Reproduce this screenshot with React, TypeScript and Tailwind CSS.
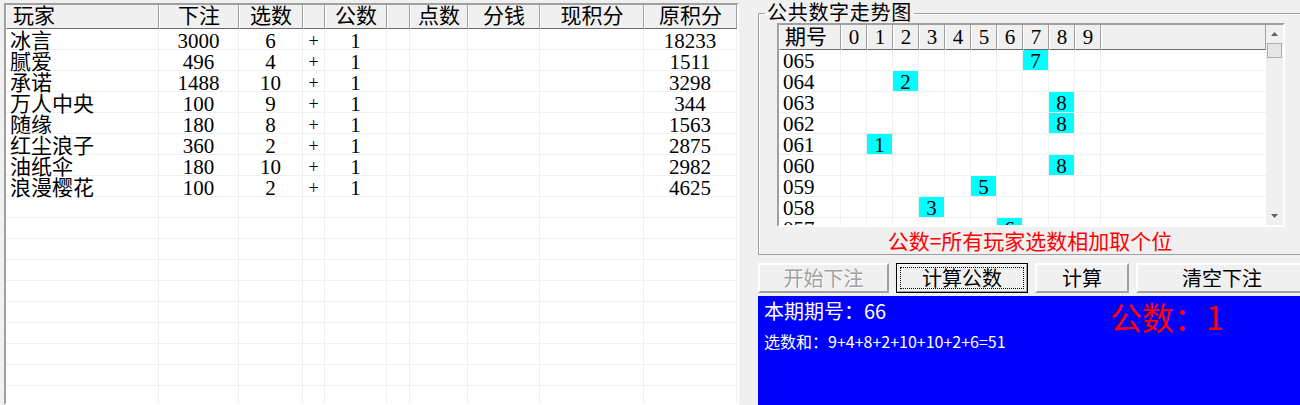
const players = [
  { name: "冰言", bet: "3000", pick: "6", pub: "1", orig: "18233" },
  { name: "腻爱", bet: "496", pick: "4", pub: "1", orig: "1511" },
  { name: "承诺", bet: "1488", pick: "10", pub: "1", orig: "3298" },
  { name: "万人中央", bet: "100", pick: "9", pub: "1", orig: "344" },
  { name: "随缘", bet: "180", pick: "8", pub: "1", orig: "1563" },
  { name: "红尘浪子", bet: "360", pick: "2", pub: "1", orig: "2875" },
  { name: "油纸伞", bet: "180", pick: "10", pub: "1", orig: "2982" },
  { name: "浪漫樱花", bet: "100", pick: "2", pub: "1", orig: "4625" },
];

const headers = ["玩家", "下注", "选数", "", "公数", "", "点数", "分钱", "现积分", "原积分"];

const trend = [
  { no: "065", n: 7 },
  { no: "064", n: 2 },
  { no: "063", n: 8 },
  { no: "062", n: 8 },
  { no: "061", n: 1 },
  { no: "060", n: 8 },
  { no: "059", n: 5 },
  { no: "058", n: 3 },
  { no: "057", n: 6 },
];

const digits = [0, 1, 2, 3, 4, 5, 6, 7, 8, 9];

const serif = "font-['Liberation_Serif','Noto_Sans_CJK_SC',serif]";

function PlayerTable() {
  const rows = [...players, ...Array.from({ length: 10 }, () => null)];
  return (
    <div
      className={`mt-[3px] ml-[4px] w-[735px] h-[402px] shrink-0 overflow-hidden bg-white border-2 border-t-[#a0a0a0] border-l-[#a0a0a0] border-r-white border-b-white text-[21px] text-black ${serif}`}
    >
      <div className="grid grid-cols-[153px_80px_64px_22px_62px_23px_58px_72px_104px_93px]">
        {headers.map((h, i) => (
          <div
            key={i}
            className={`h-[24px] leading-[23px] bg-[#f0f0f0] border-l border-l-white border-r border-r-[#a0a0a0] border-b border-b-[#696969] ${
              i === 0 ? "pl-[6px] text-left" : "text-center"
            }`}
          >
            {h}
          </div>
        ))}
        {rows.map((p, r) =>
          headers.map((_, c) => {
            let v = "";
            if (p) {
              if (c === 0) v = p.name;
              if (c === 1) v = p.bet;
              if (c === 2) v = p.pick;
              if (c === 3) v = "+";
              if (c === 4) v = p.pub;
              if (c === 9) v = p.orig;
            }
            return (
              <div
                key={`${r}-${c}`}
                className={`h-[21px] pt-[2px] leading-[21px] border-r border-b border-[#f0f0f0] whitespace-nowrap ${
                  c === 0 ? "pl-[4px] text-left" : "text-center"
                } ${c === 3 ? "text-[18px]" : ""}`}
              >
                {v}
              </div>
            );
          })
        )}
      </div>
    </div>
  );
}

function TrendChart() {
  return (
    <div
      className={`ml-[18px] w-[508px] h-[204px] overflow-hidden flex border-2 border-t-[#a0a0a0] border-l-[#a0a0a0] border-r-white border-b-white bg-white text-[21px] text-black ${serif}`}
    >
      <div className="flex-1 flex flex-col">
        <div className="flex h-[25px] leading-[24px] bg-[#f0f0f0]">
          <div className="w-[62px] pl-[5px] border-l border-l-white border-r border-r-[#a0a0a0] border-b border-b-[#696969]">
            期号
          </div>
          {digits.map((d) => (
            <div
              key={d}
              className="w-[26px] text-center border-l border-l-white border-r border-r-[#a0a0a0] border-b border-b-[#696969]"
            >
              {d}
            </div>
          ))}
          <div className="flex-1 border-l border-l-white border-r border-r-[#a0a0a0] border-b border-b-[#696969]" />
        </div>
        {trend.map((t) => (
          <div key={t.no} className="flex h-[21px] leading-[21px] border-b border-[#f0f0f0]">
            <div className="w-[62px] pl-[4px] pt-[1px] border-r border-[#f0f0f0]">{t.no}</div>
            {digits.map((d) => (
              <div key={d} className="w-[26px] border-r border-[#f0f0f0]">
                {d === t.n ? (
                  <div className="h-[20px] pt-[1px] leading-[20px] bg-[#00ffff] text-center">{d}</div>
                ) : null}
              </div>
            ))}
            <div className="flex-1" />
          </div>
        ))}
      </div>
      <div className="w-[17px] bg-[#f0f0f0] flex flex-col items-center">
        <div className="h-[18px] flex items-center justify-center">
          <svg width="7" height="4" viewBox="0 0 7 4">
            <path d="M0 4 L3.5 0 L7 4 Z" fill="#606060" />
          </svg>
        </div>
        <div className="w-[15px] h-[15px] bg-[#e6e6e6] border border-[#adadad]" />
        <div className="flex-1" />
        <div className="h-[18px] flex items-center justify-center">
          <svg width="7" height="4" viewBox="0 0 7 4">
            <path d="M0 0 L7 0 L3.5 4 Z" fill="#606060" />
          </svg>
        </div>
      </div>
    </div>
  );
}

function Btn({
  label,
  width,
  disabled,
  focused,
}: {
  label: string;
  width: string;
  disabled?: boolean;
  focused?: boolean;
}) {
  const base = `${width} h-[30px] shrink-0 bg-[#f0f0f0] text-[20px] font-['Noto_Sans_CJK_SC',sans-serif] flex items-center justify-center`;
  if (focused) {
    return (
      <div className={`${base} border border-black`}>
        <div className="w-full h-full border border-t-white border-l-white border-r-[#a0a0a0] border-b-[#a0a0a0] p-[2px]">
          <div className="w-full h-full border border-dotted border-black flex items-center justify-center leading-none text-black">
            {label}
          </div>
        </div>
      </div>
    );
  }
  return (
    <div
      className={`${base} border-2 border-t-white border-l-white border-r-[#a0a0a0] border-b-[#a0a0a0] leading-none ${
        disabled ? "text-[#a0a0a0] [text-shadow:1px_1px_0_#fff]" : "text-black"
      }`}
    >
      {label}
    </div>
  );
}

export default function App() {
  return (
    <div className="w-[1300px] h-[405px] overflow-hidden bg-[#f0f0f0] flex">
      <PlayerTable />
      <div className="ml-[19px] w-[544px] shrink-0 flex flex-col">
        <fieldset className="mt-[3px] h-[252px] border border-[#a0a0a0] shadow-[inset_1px_1px_0_#fff]">
          <legend
            className={`ml-[6px] px-[2px] h-[20px] leading-[20px] text-[20px] tracking-[0.7px] text-black ${serif}`}
          >
            公共数字走势图
          </legend>
          <TrendChart />
          <div className="h-[26px] leading-[26px] text-center text-[21px] text-[#ff0000] font-['Noto_Sans_CJK_SC',sans-serif]">
            公数=所有玩家选数相加取个位
          </div>
        </fieldset>
        <div className="mt-[8px] flex gap-[7px]">
          <Btn label="开始下注" width="w-[131px]" disabled />
          <Btn label="计算公数" width="w-[132px]" focused />
          <Btn label="计算" width="w-[94px]" />
          <Btn label="清空下注" width="w-[172px]" />
        </div>
        <div className="mt-[3px] flex-1 bg-[#0000ff] font-['Noto_Sans_CJK_SC',sans-serif] flex">
          <div className="pl-[6px] w-[352px] shrink-0">
            <div className="text-[20px] leading-[28px] mt-[1px] text-white">本期期号：66</div>
            <div className="text-[16px] leading-[20px] mt-[6px] text-white">选数和：9+4+8+2+10+10+2+6=51</div>
          </div>
          <div className="text-[32px] leading-[40px] text-[#ff0000]">公数：1</div>
        </div>
      </div>
    </div>
  );
}
